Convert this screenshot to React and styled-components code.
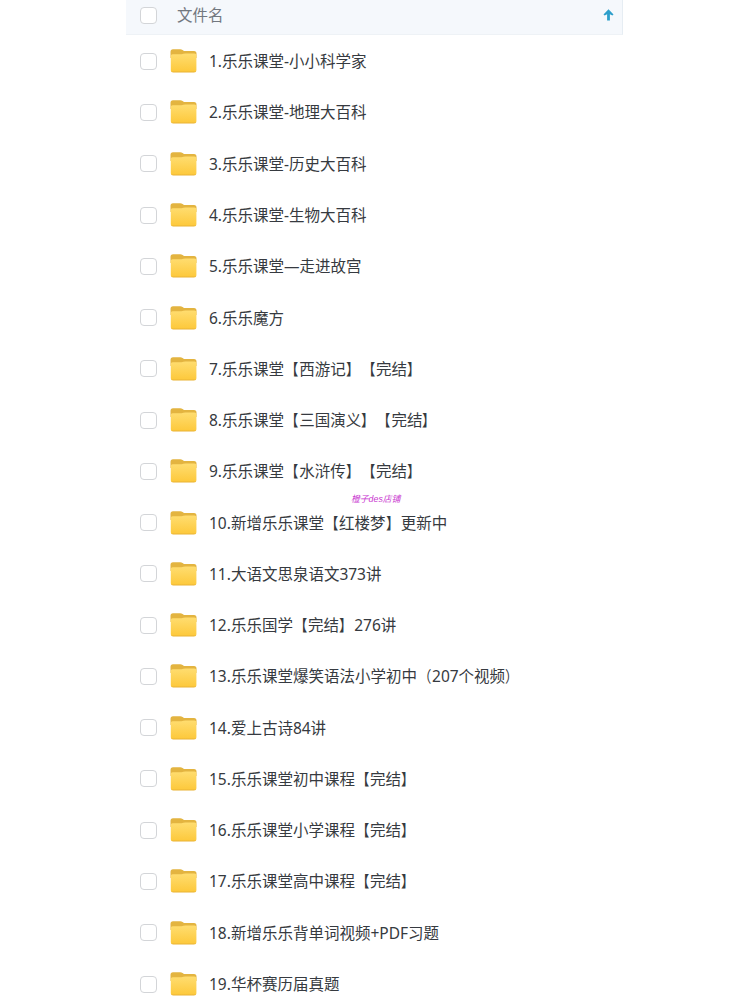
import React from 'react';
import styled, { createGlobalStyle } from 'styled-components';

const GlobalStyle = createGlobalStyle`
  * {
    box-sizing: border-box;
  }
  body {
    margin: 0;
    background: #fff;
    overflow: hidden;
  }
`;

const Page = styled.div`
  position: relative;
  height: 1000px;
  overflow: hidden;
  font-family: 'Noto Sans', 'Noto Sans CJK SC', sans-serif;
  font-size: 15.5px;
  text-spacing-trim: space-all;
`;

const FileTable = styled.div`
  width: 497px;
  margin-left: 126px;
`;

const Header = styled.div`
  display: flex;
  align-items: center;
  height: 35px;
  padding: 0 8px 4px 14px;
  background: #f5f8fc;
  border-right: 1px solid #e6edf3;
  border-bottom: 1px solid #eef2f6;
`;

const HeaderLabel = styled.span`
  flex: 1;
  margin-left: 20px;
  color: #72777f;
  line-height: 20px;
`;

const Checkbox = styled.span`
  flex: none;
  width: 17px;
  height: 17px;
  border: 1.5px solid #d3d5d8;
  border-radius: 4px;
  background: #fff;
`;

const List = styled.div`
  padding-top: 0.6px;
`;

const Row = styled.div`
  display: flex;
  align-items: center;
  height: 51.28px;
  padding-left: 14px;
`;

const FolderSvg = styled.svg`
  flex: none;
  margin: 0 12px 0 13px;
`;

const FileName = styled.span`
  color: #363a40;
  line-height: 20px;
  white-space: nowrap;
`;

// narrows the bracket towards the text it encloses
const Bracket = styled.span`
  display: inline-block;
  margin-right: -0.4px;
  transform: ${({ $open }) => ($open ? 'translateX(-1px) ' : '')}scaleX(0.85);
  transform-origin: ${({ $open }) => ($open ? 'right' : 'left')} center;
`;

const Watermark = styled.span`
  position: absolute;
  top: 493px;
  left: 351px;
  color: #c935d0;
  font-family: 'Liberation Sans', 'Noto Sans CJK SC', sans-serif;
  font-size: 8.8px;
  font-style: italic;
  line-height: 13px;
  white-space: nowrap;
`;

const files = [
  '1.乐乐课堂-小小科学家',
  '2.乐乐课堂-地理大百科',
  '3.乐乐课堂-历史大百科',
  '4.乐乐课堂-生物大百科',
  '5.乐乐课堂—走进故宫',
  '6.乐乐魔方',
  '7.乐乐课堂【西游记】【完结】',
  '8.乐乐课堂【三国演义】【完结】',
  '9.乐乐课堂【水浒传】【完结】',
  '10.新增乐乐课堂【红楼梦】更新中',
  '11.大语文思泉语文373讲',
  '12.乐乐国学【完结】276讲',
  '13.乐乐课堂爆笑语法小学初中（207个视频）',
  '14.爱上古诗84讲',
  '15.乐乐课堂初中课程【完结】',
  '16.乐乐课堂小学课程【完结】',
  '17.乐乐课堂高中课程【完结】',
  '18.新增乐乐背单词视频+PDF习题',
  '19.华杯赛历届真题',
];

const renderName = (name) =>
  name.split(/([【】（）])/).map((part, i) =>
    /^[【】（）]$/.test(part) ? (
      <Bracket key={i} $open={part === '【' || part === '（'}>
        {part}
      </Bracket>
    ) : (
      part
    )
  );

const FolderIcon = () => (
  <FolderSvg width="27" height="24" viewBox="0 0 27 24">
    <path d="M0.5 2.8Q0.5 0.3 3 0.3H10.2Q11.5 0.3 12.6 1L14 1.9H24Q26.5 1.9 26.5 4.4V9H0.5Z" fill="#e3b440" />
    <path d="M0.8 7Q0.8 5.2 2.6 5.2H11.5Q12.7 5.2 13.5 4.8Q14.3 4.4 15.4 4.4H24.4Q26.4 4.4 26.4 6.4V21Q26.4 23.5 23.9 23.5H3.3Q0.8 23.5 0.8 21Z" fill="url(#folderFront)" />
    <defs>
      <linearGradient id="folderFront" x1="0" y1="0" x2="0" y2="1">
        <stop offset="0" stopColor="#ffdd70" />
        <stop offset="0.9" stopColor="#fdca3f" />
        <stop offset="1" stopColor="#e9b233" />
      </linearGradient>
    </defs>
  </FolderSvg>
);

const SortArrow = () => (
  <svg width="11" height="12" viewBox="0 0 11 12">
    <path d="M5.5 0.3L10.5 5.4L9.4 6.6L6.9 5.2V11.6H4.1V5.2L1.6 6.6L0.5 5.4Z" fill="#2d9fcb" />
  </svg>
);

const App = () => {
  return (
    <>
      <GlobalStyle />
      <Page>
        <FileTable>
          <Header>
            <Checkbox />
            <HeaderLabel>文件名</HeaderLabel>
            <SortArrow />
          </Header>
          <List>
            {files.map((name) => (
              <Row key={name}>
                <Checkbox />
                <FolderIcon />
                <FileName>{renderName(name)}</FileName>
              </Row>
            ))}
          </List>
        </FileTable>
        <Watermark>橙子des店铺</Watermark>
      </Page>
    </>
  );
};

export default App;
